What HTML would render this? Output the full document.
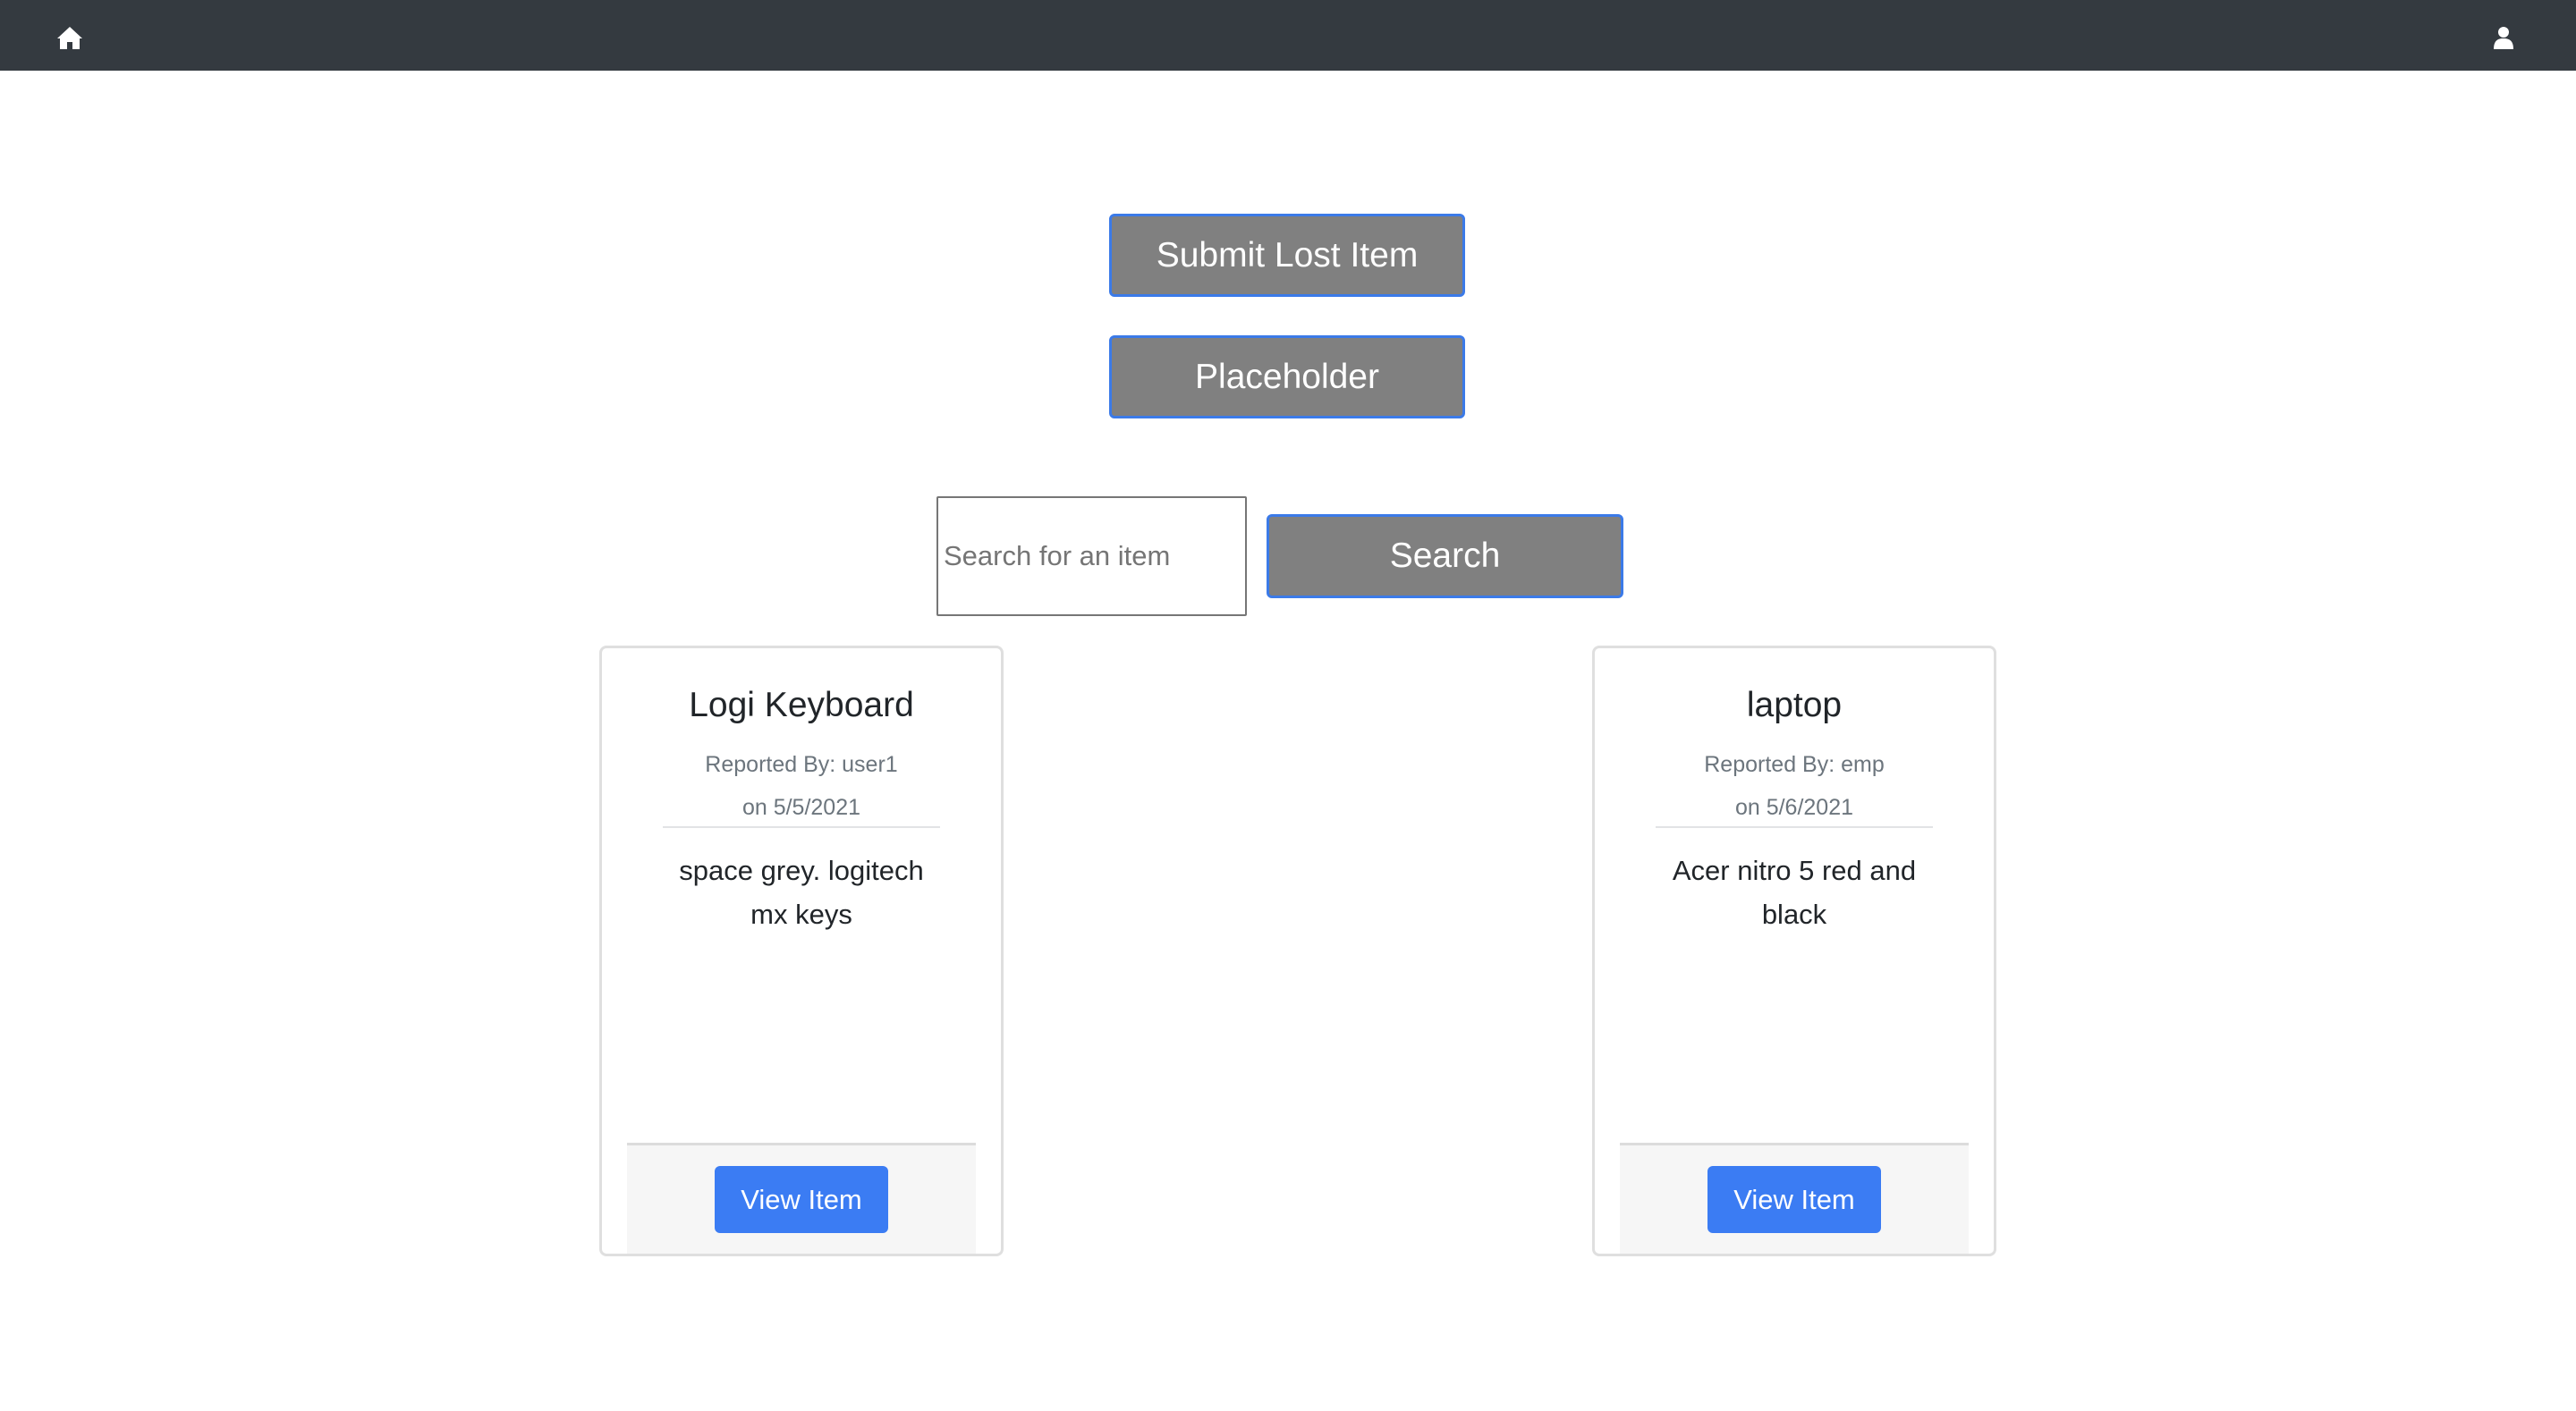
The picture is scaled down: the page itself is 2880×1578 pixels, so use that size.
<!DOCTYPE html>
<html><head><meta charset="utf-8"><style>
*{box-sizing:border-box;margin:0;padding:0}
body{width:2880px;height:1578px;background:#fff;font-family:"Liberation Sans",sans-serif;position:relative;overflow:hidden}
.nav{position:absolute;left:0;top:0;width:2880px;height:79px;background:#343a40}
.btn{position:absolute;background:#808080;border:3px solid #3b7ae8;border-radius:6px;color:#fff;font-size:39px;display:flex;align-items:center;justify-content:center}
.input{position:absolute;left:1047px;top:555px;width:347px;height:134px;border:2px solid #767676;border-radius:2px;color:#757575;font-size:31px;display:flex;align-items:center;padding-left:6px}
.card{position:absolute;top:722px;width:452px;height:683px;border:3px solid #dfdfdf;border-radius:8px;background:#fff;text-align:center}
.t{position:absolute;left:0;right:0;top:40px;font-size:39px;line-height:48px;color:#212529}
.r{position:absolute;left:0;right:0;top:106px;font-size:25px;color:#6c757d;line-height:48px}
.hr{position:absolute;left:68px;width:310px;top:199px;height:2px;background:#e2e3e5}
.d{position:absolute;left:70px;right:70px;top:224px;font-size:31px;color:#212529;line-height:49px}
.f{position:absolute;left:28px;width:390px;top:553px;bottom:0;background:#f6f6f6;border-top:3px solid #dcdcdc}
.vb{position:absolute;left:98px;top:23px;width:194px;height:75px;background:#3b7cf3;border-radius:6px;color:#fff;font-size:31px;display:flex;align-items:center;justify-content:center}
</style></head><body>
<div class="nav">
<svg style="position:absolute;left:63px;top:28px" width="30" height="28" viewBox="0 0 30 28"><path d="M15 2 L1 15 L4 15 L4 27 L12 27 L12 19 L18 19 L18 27 L26 27 L26 15 L29 15 Z" fill="#fff"/></svg>
<svg style="position:absolute;left:2787px;top:29px" width="24" height="26" viewBox="0 0 24 26"><circle cx="12" cy="7" r="6" fill="#fff"/><path d="M1 26 C1 17 5 14 12 14 C19 14 23 17 23 26 Z" fill="#fff"/></svg>
</div>
<div class="btn" style="left:1240px;top:239px;width:398px;height:93px">Submit Lost Item</div>
<div class="btn" style="left:1240px;top:375px;width:398px;height:93px">Placeholder</div>
<div class="input">Search for an item</div>
<div class="btn" style="left:1416px;top:575px;width:399px;height:94px">Search</div>
<div class="card" style="left:670px">
<div class="t">Logi Keyboard</div>
<div class="r">Reported By: user1<br>on 5/5/2021</div>
<div class="hr"></div>
<div class="d">space grey. logitech mx keys</div>
<div class="f"><div class="vb">View Item</div></div>
</div>
<div class="card" style="left:1780px">
<div class="t">laptop</div>
<div class="r">Reported By: emp<br>on 5/6/2021</div>
<div class="hr"></div>
<div class="d">Acer nitro 5 red and black</div>
<div class="f"><div class="vb">View Item</div></div>
</div>
</body></html>
